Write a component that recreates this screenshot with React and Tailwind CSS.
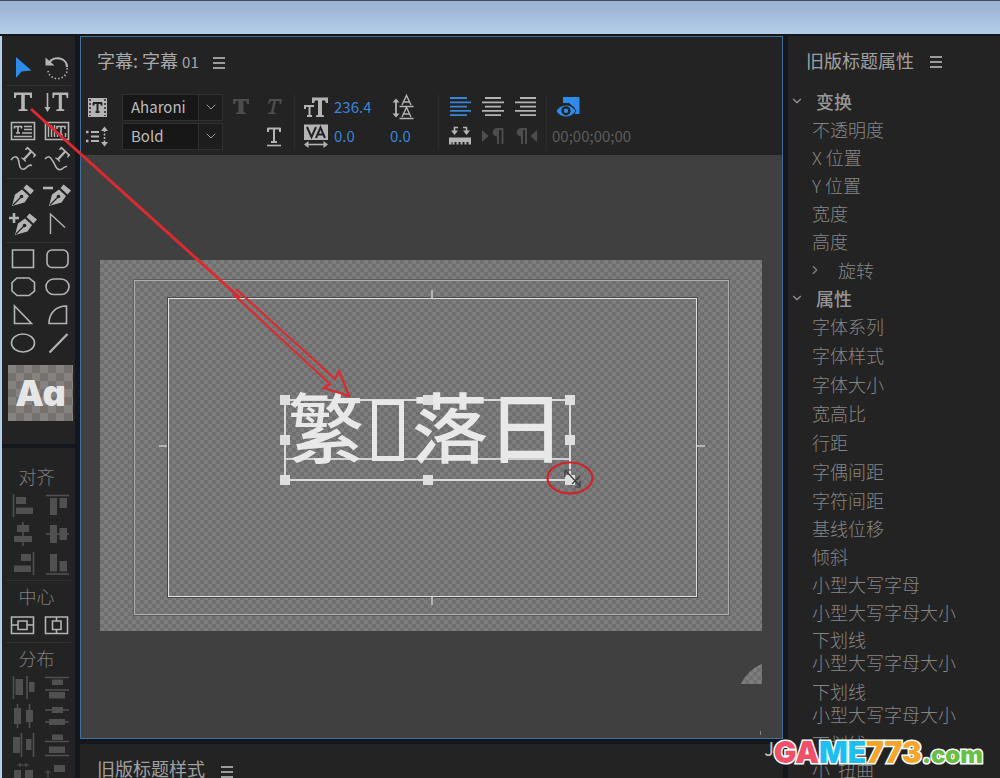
import { ChevronDown, ChevronRight } from "lucide-react";

const FONT = "font-['Noto_Sans_CJK_SC','Liberation_Sans',sans-serif]";

function Icon({ children, className = "text-[#b4b4b4]" }) {
    return (
        <svg viewBox="0 0 28 28" fill="none" stroke="currentColor" strokeWidth="1.6" className={`size-7 ${className}`}>
            {children}
        </svg>
    );
}

function Menu() {
    return (
        <button aria-label="menu" className="mt-1 flex flex-col gap-[3px]">
            <span className="block h-0.5 w-3 bg-[#9c9c9c]" />
            <span className="block h-0.5 w-3 bg-[#9c9c9c]" />
            <span className="block h-0.5 w-3 bg-[#9c9c9c]" />
        </button>
    );
}

const T_PATH = "M5 4.500H23V10H21.300L20.500 7H15.800V21L18.500 21.600V23H9.500V21.600L12.200 21V7H7.500L6.700 10H5Z";

const selectTools = [
    ["选择工具", <path d="M7 4V25L12.500 18.500L22.500 17.500Z" fill="#2d8ceb" stroke="none" />],
    ["旋转工具", <>
        <path d="M6 10A9.500 8.500 0 0 1 24 14" strokeWidth="2.200" />
        <path d="M24 15A9.500 9 0 0 1 5 18" strokeDasharray="1.500 2" />
        <path d="M2.500 4.500V12.500H11.500Z" fill="currentColor" stroke="none" />
    </>],
];

const typeTools = [
    ["文字工具", <path d={T_PATH} fill="currentColor" stroke="none" />],
    ["垂直文字工具", <>
        <g transform="translate(5 0) scale(.88 1)"><path d={T_PATH} fill="currentColor" stroke="none" /></g>
        <path d="M4.500 5V21" />
        <path d="M1.500 19H7.500L4.500 24Z" fill="currentColor" stroke="none" />
    </>],
    ["区域文字工具", <>
        <path d="M2.500 5.500H25.500V22.500H2.500Z" />
        <path d="M15 9.500H23M15 12.500H23M13 16H23M5 19.500H23" strokeWidth="1.400" />
        <path d="M5 9.500H13M9 9.500V16M7 16H11M5.500 9V11.500M12.500 9V11.500" />
    </>],
    ["垂直区域文字工具", <>
        <path d="M2.500 5.500H25.500V22.500H2.500Z" />
        <path d="M5.500 8V20M8.500 8V20M11.500 8V20M14.500 15V20M22.500 16V20" strokeWidth="1.400" />
        <path d="M13.500 9.500H22.500M18 9.500V18M16 18H20M14 9V12M22 9V12" />
    </>],
    ["路径文字工具", <>
        <path d="M2 14C6 8 9.500 11 10 17C10.500 22 13 25 17 22C19 20 20 18 23 19.500" />
        <path d={T_PATH} transform="translate(18.500 9.500) rotate(43) scale(.68) translate(-14 -14)" fill="currentColor" stroke="none" />
    </>],
    ["垂直路径文字工具", <>
        <path d="M2 13C6 8 8 12 11 17C13 22 15 25 19 23C21 21 22 20 24 20.500" />
        <path d={T_PATH} transform="translate(18.500 9.500) rotate(43) scale(.68) translate(-14 -14)" fill="currentColor" stroke="none" />
    </>],
];

function Pen() {
    return (
        <>
            <path d="M3 25L6 13.500L13 8.500L20 15L15.500 21.500Z" fill="currentColor" stroke="none" />
            <path d="M14.500 7L17.500 3.500L25 9.500L21.500 13.500Z" fill="currentColor" stroke="none" />
            <path d="M4 24L11.500 16.500" stroke="#232323" strokeWidth="1.200" />
            <circle cx="12.500" cy="15.500" r="1.800" fill="#232323" stroke="none" />
        </>
    );
}

const penTools = [
    ["钢笔工具", <Pen />],
    ["删除锚点工具", <><g transform="translate(3 0)"><Pen /></g><path d="M0 7H10" strokeWidth="2.600" /></>],
    ["添加锚点工具", <><g transform="translate(3 0)"><Pen /></g><path d="M0 8H10M5 3V13" strokeWidth="2.600" /></>],
    ["转换锚点工具", <path d="M7.500 24V4L22 17.500" strokeWidth="1.400" />],
];

const shapeTools = [
    ["矩形工具", <path d="M3.500 5H24.500V22.500H3.500Z" />],
    ["圆角矩形工具", <rect x="4" y="5" width="21" height="17.500" rx="5" />],
    ["切角矩形工具", <path d="M8 5H20L25.500 9.500V18L20 22.500H8L3 18V9.500Z" />],
    ["圆矩形工具", <rect x="3" y="6" width="23" height="15.500" rx="7.750" />],
    ["楔形工具", <path d="M5.500 5V22.500H22.500Z" />],
    ["弧形工具", <path d="M23.500 5V22.500H6C6 12 13 5 23.500 5Z" />],
    ["椭圆工具", <ellipse cx="14" cy="14" rx="11.500" ry="9" />],
    ["直线工具", <path d="M6.500 23.500L24.500 5" strokeWidth="2.200" />],
];

const alignTools = [
    ["水平靠左", <><path d="M4.500 3V26" /><path d="M7 6H17V13H7ZM7 16.500H24V23H7Z" fill="currentColor" stroke="none" /></>],
    ["垂直靠上", <><path d="M3 4.500H26" /><path d="M7 7H14V24H7ZM16.500 7H24V17H16.500Z" fill="currentColor" stroke="none" /></>],
    ["水平居中", <><path d="M14 2V26" /><path d="M8 5H20V12H8ZM5 16H23V22H5Z" fill="currentColor" stroke="none" /></>],
    ["垂直居中", <><path d="M3 14H26" /><path d="M7 5H14V23H7ZM16.500 8H24V20H16.500Z" fill="currentColor" stroke="none" /></>],
    ["水平靠右", <><path d="M24.500 3V26" /><path d="M12 5H22V12H12ZM5 16.500H22V23H5Z" fill="currentColor" stroke="none" /></>],
    ["垂直靠下", <><path d="M3 25H26" /><path d="M7 5H14V22.500H7ZM16.500 12H24V22.500H16.500Z" fill="currentColor" stroke="none" /></>],
];

const centerTools = [
    ["垂直居中画面", <path d="M2.500 6H24.500V22.500H2.500ZM9 10H18V18.500H9ZM2.500 14H9M18 14H24.500" />],
    ["水平居中画面", <path d="M2.500 6H24.500V22.500H2.500ZM9.500 10H18V18.500H9.500ZM13.500 6V10M13.500 18.500V22.500" />],
];

const distributeTools = [
    ["左侧分布", <><path d="M4.500 3V26M18 3V26" /><path d="M6.500 6H14V22H6.500ZM20 9H25.500V19H20Z" fill="currentColor" stroke="none" /></>],
    ["顶部分布", <><path d="M2 4.500H26M2 17H26" /><path d="M9 6.500H20V12H9ZM6 19H22V25.500H6Z" fill="currentColor" stroke="none" /></>],
    ["水平中心分布", <><path d="M8.500 2V26M20.500 2V26" /><path d="M5 6H12V22H5ZM17 8H24V20H17Z" fill="currentColor" stroke="none" /></>],
    ["垂直中心分布", <><path d="M2 8H26M2 20H26" /><path d="M9 5H20V11H9ZM6 17H22V23H6Z" fill="currentColor" stroke="none" /></>],
    ["右侧分布", <><path d="M12.500 2V26M24.500 2V26" /><path d="M4 6H11V22H4ZM17 8H22.500V19H17Z" fill="currentColor" stroke="none" /></>],
    ["底部分布", <><path d="M2 10.500H26M2 24.500H26" /><path d="M9 3.500H20V9H9ZM6 15.500H22V22H6Z" fill="currentColor" stroke="none" /></>],
    ["水平平均间隔", <><path d="M8 5H20M11 3V7M17 3V7" strokeWidth="1.200" /><path d="M5 10H12V28H5ZM16 10H24V28H16Z" fill="currentColor" stroke="none" /></>],
    ["垂直平均间隔", <><path d="M5 10V24M2 12H8M2 21H8" strokeWidth="1.200" /><path d="M11 5H22V12H11ZM9 18H25V24H9Z" fill="currentColor" stroke="none" /></>],
];

function ToolGrid({ tools, className, gap = "gap-y-px" }) {
    return (
        <div className={`grid grid-cols-2 pr-px pl-1 ${gap}`}>
            {tools.map(([name, icon]) => (
                <button key={name} aria-label={name} className="flex h-7 items-center justify-center">
                    <Icon className={className}>{icon}</Icon>
                </button>
            ))}
        </div>
    );
}

function Divider({ margin = "mt-[3px]" }) {
    return <div className={`mx-1 mb-0.5 h-px bg-[#303030] ${margin}`} />;
}

function ToolTitle({ children }) {
    return <h2 className="h-7 pr-1 text-center text-lg leading-[26px] font-light text-[#7f7f7f]">{children}</h2>;
}

function Toolbox() {
    return (
        <aside className="flex w-[73px] shrink-0 flex-col gap-1">
            <div className="bg-[#232323] pt-[17px] pb-[23px]">
                <ToolGrid tools={selectTools} />
                <Divider margin="mt-1" />
                <ToolGrid tools={typeTools} />
                <Divider margin="mt-1" />
                <ToolGrid tools={penTools} />
                <Divider margin="mt-1" />
                <ToolGrid tools={shapeTools} gap="gap-y-0" />
                <div className="mt-2 mr-0.5 ml-1.5 flex h-14 items-center justify-center bg-[repeating-conic-gradient(#74716f_0_25%,#85827f_0_50%)] bg-[length:16px_16px] font-[Inter,sans-serif] text-4xl font-black text-[#e6e6e6] [font-feature-settings:'cv11']">
                    Aa
                </div>
            </div>
            <div className="grow bg-[#232323] pt-[15px]">
                <ToolTitle>对齐</ToolTitle>
                <ToolGrid tools={alignTools} className="text-[#505050]" />
                <Divider />
                <ToolTitle>中心</ToolTitle>
                <ToolGrid tools={centerTools} />
                <Divider />
                <ToolTitle>分布</ToolTitle>
                <ToolGrid tools={distributeTools} className="text-[#505050]" />
            </div>
        </aside>
    );
}

function FontSelect({ label, value }) {
    return (
        <label className="relative flex h-[27px] w-[101px] items-center border border-[#303030] bg-[#171717]">
            <select aria-label={label} className="h-full w-full appearance-none pl-2 text-[15px] leading-6 text-[#bdbdbd] outline-none">
                <option>{value}</option>
            </select>
            <span className="pointer-events-none absolute inset-y-0 right-0 flex w-6 items-center justify-center border-l border-[#303030] bg-[#1d1d1d]">
                <ChevronDown size={16} strokeWidth={1.5} className="text-[#9a9a9a]" />
            </span>
        </label>
    );
}

function FormatButton({ label, className, children }) {
    return (
        <button aria-label={label} className="flex h-7 w-[33px] items-center justify-center">
            <Icon className={className}>{children}</Icon>
        </button>
    );
}

function Bars({ lines }) {
    return <path d={lines} strokeWidth="1.800" />;
}

function FormatBar() {
    return (
        <div className="flex items-center pb-[5px]">
            <div className="grid gap-px">
                <FormatButton label="滚动/游动选项">
                    <path d="M4 5H23V24H4Z" fill="currentColor" stroke="none" />
                    <path d="M6 6V23M21 6V23" stroke="#232323" strokeDasharray="2 2" strokeWidth="1.500" />
                    <path d="M9 10H18M13.500 10V19M11.500 19H15.500M9.500 10V12.500M17.500 10V12.500" stroke="#232323" strokeWidth="2" />
                </FormatButton>
                <FormatButton label="制表符">
                    <path d="M7 10H15M7 14.500H15M7 19H15" strokeWidth="2" />
                    <path d="M2 10H4.500M2 19H4.500" strokeWidth="2.500" />
                    <path d="M20.500 8V22" strokeDasharray="2 1.500" />
                    <path d="M17 9L20.500 4.500L24 9ZM17 20L20.500 24.500L24 20Z" fill="currentColor" stroke="none" />
                </FormatButton>
            </div>
            <div className="ml-2 grid gap-0.5">
                <FontSelect label="字体" value="Aharoni" />
                <FontSelect label="样式" value="Bold" />
            </div>
            <div className="ml-px grid grid-cols-2 gap-y-px">
                <FormatButton label="粗体" className="text-[#4d4d4d]">
                    <path d="M6 6H22V11H20L19 8H16.500V19L19 20V21H9V20L11.500 19V8H9L8 11H6Z" fill="currentColor" stroke="none" />
                </FormatButton>
                <FormatButton label="斜体" className="text-[#4d4d4d]">
                    <path d="M9 6H22L21 11H19.500V8H16L13.500 19L15.500 20V21H8V20L11 19L13.500 8H11L9 11H8Z" fill="currentColor" stroke="none" />
                </FormatButton>
                <span />
                <FormatButton label="下划线">
                    <path d="M7.500 6.500H20.500M14 6.500V20M11 20H17M8 6V10M20 6V10" strokeWidth="2" />
                    <path d="M7 23.500H21" />
                </FormatButton>
            </div>
            <div className="ml-1 h-14 w-px bg-[#2c2c2c]" />
            <div className="ml-1 grid grid-cols-[33px_56px_33px] items-center gap-y-px text-[15px] leading-7 text-[#3a85d8]">
                <FormatButton label="字体大小">
                    <path d="M10 4.500H26V10H24L23 7.500H20V22L22 22.500V24H14V22.500L16 22V7.500H13L12 10H10Z" fill="currentColor" stroke="none" />
                    <path d="M2.500 13H12M7.500 13V23M5 23H10M3 12V16" strokeWidth="2" />
                </FormatButton>
                <span className="pl-0.5">236.4</span>
                <FormatButton label="行距">
                    <path d="M5 8V22" strokeWidth="1.800" />
                    <path d="M1.500 9.500L5 5.500L8.500 9.500ZM1.500 20.500L5 24.500L8.500 20.500Z" fill="currentColor" stroke="none" />
                    <path d="M11 12L15.500 2.500L20 12M12.500 9H18.500M8.500 13.500H22.500M11 24L15.500 14.500L20 24M12.500 21H18.500M8.500 25.500H22.500" strokeWidth="1.400" />
                </FormatButton>
                <FormatButton label="字偶间距">
                    <path d="M2 2.500H26V18H2Z" fill="currentColor" stroke="none" />
                    <path d="M5 5L9.500 15L14 5M14 16L18.500 5.500L23 16M15.500 12.500H21.500" stroke="#232323" strokeWidth="2" />
                    <path d="M5 22.500H23" />
                    <path d="M6.500 19V26L2 22.500ZM21.500 19V26L26 22.500Z" fill="currentColor" stroke="none" />
                </FormatButton>
                <span className="pl-0.5">0.0</span>
                <span className="pl-0.5">0.0</span>
            </div>
            <div className="ml-[17px] h-14 w-px bg-[#2c2c2c]" />
            <div className="ml-1 grid grid-cols-3 gap-y-px">
                <FormatButton label="左对齐" className="text-[#3a85d8]">
                    <Bars lines="M4 5H21M4 9.300H25M4 13.600H21M4 17.900H25M4 22.200H21" />
                </FormatButton>
                <FormatButton label="居中">
                    <Bars lines="M6 5H22M3 9.300H25M6 13.600H22M3 17.900H25M6 22.200H22" />
                </FormatButton>
                <FormatButton label="右对齐">
                    <Bars lines="M8 5H24M3 9.300H24M8 13.600H24M3 17.900H24M8 22.200H24" />
                </FormatButton>
                <FormatButton label="制表位">
                    <path d="M3 15.500H25V22.500H22.500V20H20.500V22.500H18.500V20H16.500V22.500H14.500V20H12.500V22.500H10.500V20H8.500V22.500H6.500V20H5.500V22.500H3Z" fill="currentColor" stroke="none" />
                    <path d="M8.500 10V5.500H12M20.500 10V5.500H17" />
                    <path d="M5 8.500H12L8.500 13ZM17 8.500H24L20.500 13Z" fill="currentColor" stroke="none" />
                </FormatButton>
                <FormatButton label="从左至右" className="text-[#4d4d4d]">
                    <path d="M3 8V20L9.500 14ZM18 6A4 4 0 0 0 18 14.500V22H20V8H22.500V22H24.500V6Z" fill="currentColor" stroke="none" />
                </FormatButton>
                <FormatButton label="从右至左" className="text-[#4d4d4d]">
                    <path d="M25 8V20L18.500 14ZM9 6A4 4 0 0 0 9 14.500V22H11V8H13V22H15V6Z" fill="currentColor" stroke="none" />
                </FormatButton>
            </div>
            <div className="ml-1 h-14 w-px bg-[#2c2c2c]" />
            <div className="ml-1 grid gap-y-px text-[15px] leading-7 text-[#5c5c5c]">
                <FormatButton label="显示背景视频" className="text-[#2d8ceb]">
                    <path d="M9 4H25.500V21H21V15L15 10H9Z" fill="currentColor" stroke="none" />
                    <path d="M2 18C7 10 17 10 22 18C17 26 7 26 2 18Z" fill="#2d8ceb" stroke="#232323" strokeWidth="1" />
                    <circle cx="12" cy="17.800" r="4.600" fill="#232323" stroke="none" />
                    <circle cx="12" cy="17.800" r="2.200" fill="#2d8ceb" stroke="none" />
                </FormatButton>
                <span className="pl-px">00;00;00;00</span>
            </div>
        </div>
    );
}

function Handle({ className }) {
    return <span className={`absolute size-2.5 bg-[#dedede] ${className}`} />;
}

function TitleText() {
    return (
        <div className="absolute top-[139px] left-[184px] h-[82px] w-[287px] border-2 border-[#dadada]">
            <div className="absolute inset-x-0 top-[57px] h-0.5 bg-[#d0d0d0]" />
            <div className="absolute -top-[15px] left-0.5 flex items-center text-[76px] leading-[76px] font-medium whitespace-nowrap text-[#e8e8e8]">
                <span>繁</span>
                <span className="mx-2 mt-3 h-[61px] w-8 border-[5px] border-[#e8e8e8]" />
                <span>落日</span>
            </div>
            <Handle className="-top-1.5 -left-1.5" />
            <Handle className="-top-1.5 left-[137px]" />
            <Handle className="-top-1.5 -right-1.5" />
            <Handle className="top-[34px] -left-1.5" />
            <Handle className="top-[34px] -right-1.5" />
            <Handle className="-bottom-1.5 -left-1.5" />
            <Handle className="-bottom-1.5 left-[137px]" />
            <Handle className="-right-1.5 -bottom-1.5" />
        </div>
    );
}

const CHECKER = "bg-[#7b7b7b] bg-[repeating-conic-gradient(#6f6f6f_0_25%,#7d7d7d_0_50%)] bg-[length:8px_8px]";

function Workspace() {
    return (
        <div className="relative grow bg-[#404040] pt-[105px] pr-5 pl-[19px]">
            <div className={`relative aspect-[661/370] overflow-hidden ${CHECKER}`}>
                <div className="absolute top-5 right-[33px] bottom-4 left-[34px] border border-[#b0b0b0] outline outline-[#5c5c5c]" />
                <div className="absolute top-[38px] right-[65px] bottom-[34px] left-[68px] border border-[#e0e0e0] outline outline-[#4a4a4a]" />
                <div className="absolute top-[30px] left-1/2 h-2 w-0.5 bg-[#b4b4b4]" />
                <div className="absolute bottom-[26px] left-1/2 h-2 w-0.5 bg-[#b4b4b4]" />
                <div className="absolute top-1/2 left-[59px] h-0.5 w-2 bg-[#b4b4b4]" />
                <div className="absolute top-1/2 right-[57px] h-0.5 w-2 bg-[#b4b4b4]" />
                <TitleText />
            </div>
            <div className={`absolute right-5 bottom-[54px] h-5 w-[21px] [clip-path:path('M0_20Q7_6_21_0V20Z')] ${CHECKER}`} />
            <div className="absolute right-[21px] bottom-[3px] h-1 w-px bg-[#888]" />
        </div>
    );
}

function Editor() {
    return (
        <main className="flex min-w-0 grow flex-col gap-[5px]">
            <section className="flex grow flex-col border border-[#3d6f9f] bg-[#232323]">
                <div className="flex h-14 items-center gap-3.5 pb-2 pl-4">
                    <h1 className="text-lg leading-6 text-[#a9a9a9]">字幕: 字幕 <span className="text-[15px]">01</span></h1>
                    <Menu />
                </div>
                <FormatBar />
                <Workspace />
            </section>
            <section className="flex h-[34px] shrink-0 items-start gap-4 bg-[#232323] pt-3 pl-[17px]">
                <h2 className="text-lg leading-6 text-[#a0a0a0]">旧版标题样式</h2>
                <div className="pt-1.5">
                    <Menu />
                </div>
            </section>
        </main>
    );
}

const transformRows = ["不透明度", "X 位置", "Y 位置", "宽度", "高度"];
const fontRows = ["字体系列", "字体样式", "字体大小", "宽高比", "行距", "字偶间距"];
const moreRows = ["字符间距", "基线位移", "倾斜", "小型大写字母", "小型大写字母大小"];

function GroupHeader({ children }) {
    return (
        <button className="flex h-7 items-center gap-3 pl-0.5 text-lg font-medium text-[#969696]">
            <ChevronDown size={14} strokeWidth={2} />
            {children}
        </button>
    );
}

function Properties() {
    return (
        <aside className="w-[212px] shrink-0 overflow-hidden bg-[#232323] text-lg font-light text-[#858585]">
            <div className="flex h-[51px] items-center gap-4 pb-[3px] pl-[18px]">
                <h2 className="font-normal text-[#a0a0a0]">旧版标题属性</h2>
                <Menu />
            </div>
            <GroupHeader>变换</GroupHeader>
            <ul className="pl-6 leading-7">
                {transformRows.map((row) => <li key={row} className="h-7 whitespace-nowrap">{row}</li>)}
            </ul>
            <button className="flex h-[29px] items-center gap-4 pl-5">
                <ChevronRight size={14} strokeWidth={2} />
                旋转
            </button>
            <GroupHeader>属性</GroupHeader>
            <ul className="pl-6 leading-7">
                {fontRows.map((row) => <li key={row} className="h-[29px] whitespace-nowrap">{row}</li>)}
                {moreRows.map((row) => <li key={row} className="h-7 whitespace-nowrap">{row}</li>)}
            </ul>
            <ul className="pt-0.5 pl-6 leading-[23px]">
                {[0, 1].map((n) => (
                    <li key={n} className="flex h-[52px] flex-col whitespace-nowrap">
                        <span>下划线</span>
                        <span>小型大写字母大小</span>
                    </li>
                ))}
                <li className="h-[26px]">下划线</li>
                <li className="flex gap-2">小<span>扭曲</span></li>
            </ul>
        </aside>
    );
}

function Annotations() {
    return (
        <svg width="610" height="510" fill="none" className="pointer-events-none absolute top-0 left-0">
            <path d="M31 109L240 298" stroke="#dc2a30" strokeWidth="3" />
            <path d="M236 289L335 379L339 371L349 396L324 388L330 384L233 294" stroke="#dc2a30" strokeWidth="2.200" />
            <ellipse cx="570" cy="478" rx="22.500" ry="15.500" stroke="#d42028" strokeWidth="2.200" />
            <path d="M565 477V470H571M566 471L580 486M575 487H580V481M572 484L580 476" stroke="#3a3a3a" strokeWidth="1.200" />
        </svg>
    );
}

function Watermark() {
    return (
        <>
            <span className="absolute right-[226px] bottom-[18px] text-lg leading-6 text-[#c4c4c4]">J</span>
            <a
                href="#home"
                className="absolute right-[17px] bottom-1.5 flex items-baseline font-[Inter,sans-serif] text-[30px] leading-10 font-black [-webkit-text-stroke:3px_#fff] [paint-order:stroke_fill]"
            >
                <span className="text-[#f0506a]">GA</span>
                <span className="text-[#1cbff0]">ME</span>
                <span className="text-[#f5a52c]">773</span>
                <span className="text-2xl text-[#67c043]">.com</span>
            </a>
        </>
    );
}

export default function App() {
    return (
        <div className={`relative flex h-screen flex-col overflow-hidden bg-[#14181c] ${FONT}`}>
            <header className="h-9 shrink-0 border-t border-[#4c4a54] bg-linear-to-b from-[#98b1d4] to-[#b6cfe8] shadow-[inset_0_-2px_0_#14181c]" />
            <div className="flex min-h-0 grow border-l-2 border-[#b4d0ea]">
                <Toolbox />
                <div className="w-[5px] shrink-0" />
                <Editor />
                <div className="w-[5px] shrink-0" />
                <Properties />
            </div>
            <Annotations />
            <Watermark />
        </div>
    );
}
